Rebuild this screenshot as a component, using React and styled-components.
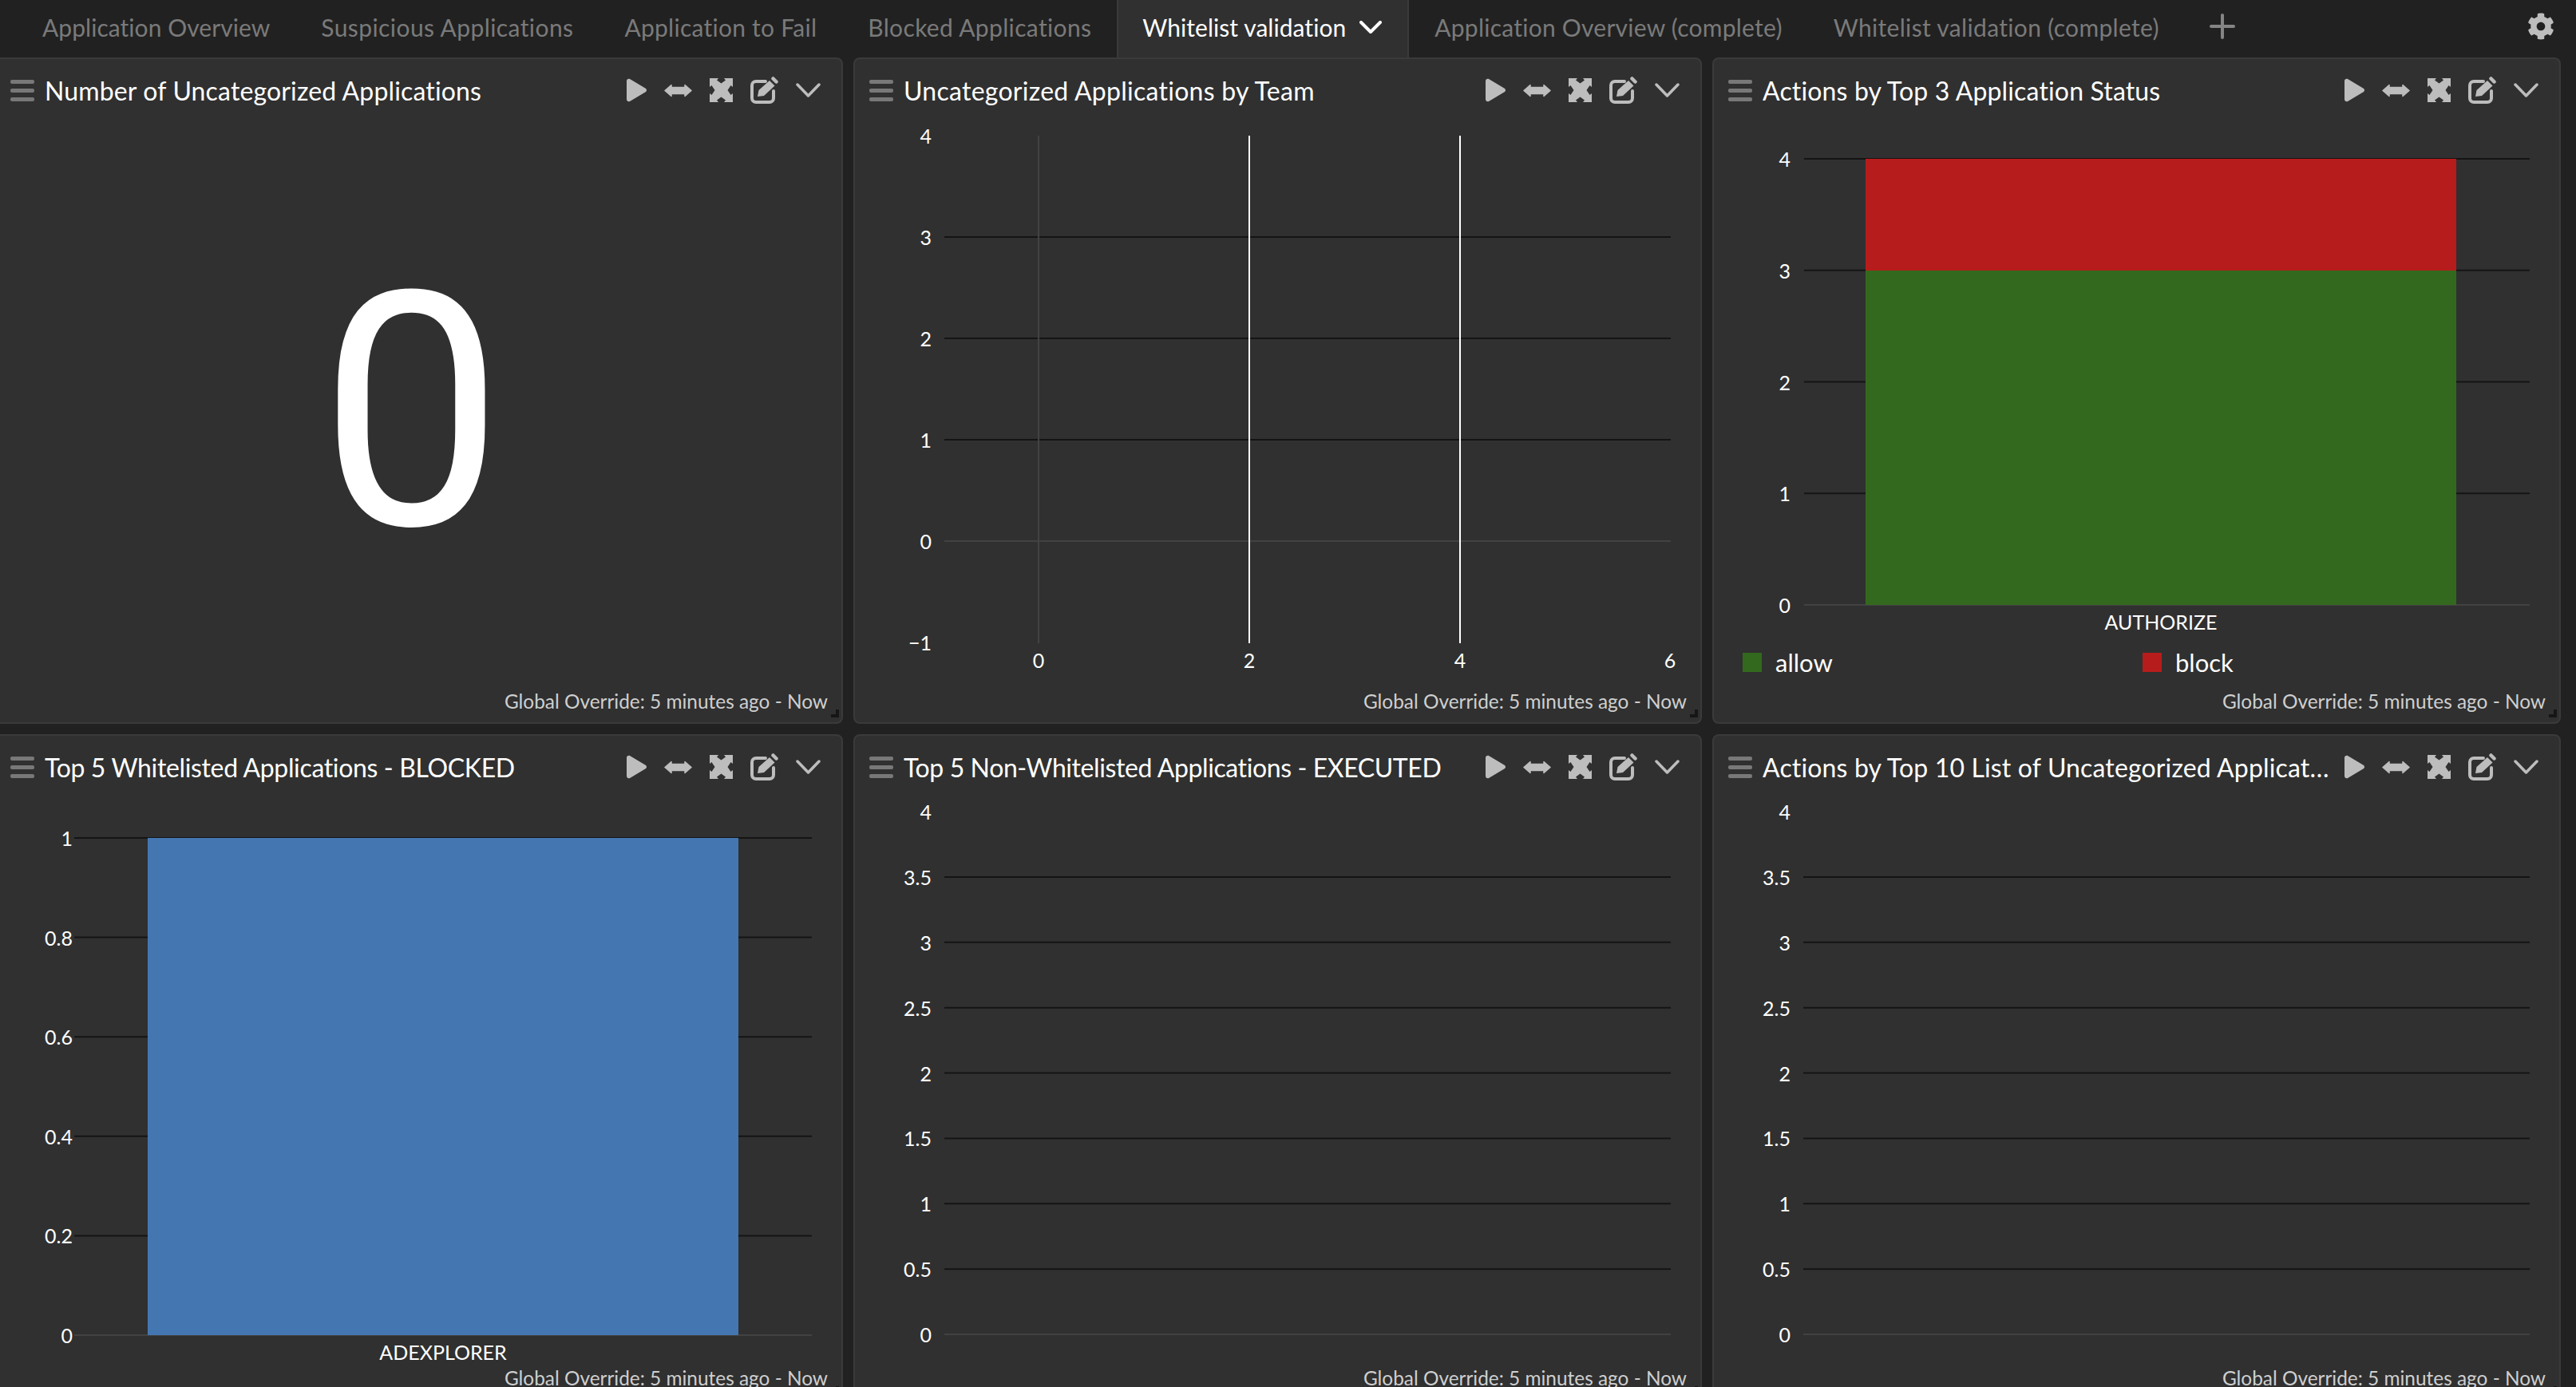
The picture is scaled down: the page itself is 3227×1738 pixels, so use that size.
import * as React from 'react';
import styled, { createGlobalStyle } from 'styled-components';
import { FaPlay, FaCog } from 'react-icons/fa';
import { Plus } from 'lucide-react';

const FONT = '"Lato", "Noto Sans", sans-serif';

const GlobalStyle = createGlobalStyle`
  html, body {
    margin: 0;
    padding: 0;
    background: #212121;
    font-family: ${FONT};
  }
`;

const Page = styled.div`
  width: 3227px;
  height: 1738px;
  overflow: hidden;
  background: #212121;
`;

const TabBar = styled.div`
  height: 72px;
  display: flex;
  align-items: stretch;
  padding-left: 21px;
`;

const Tab = styled.div`
  display: flex;
  align-items: center;
  gap: 17px;
  padding: 0 ${p => (p.$active ? 34 : 32)}px 4px 32px;
  font-size: 30px;
  letter-spacing: ${p => p.$ls}px;
  white-space: nowrap;
  color: ${p => (p.$active ? '#ffffff' : '#7a7a7a')};
  background: ${p => (p.$active ? '#303030' : 'transparent')};
  box-shadow: ${p => (p.$active ? 'inset 2px 0 0 #3a3a3a, inset -2px 0 0 #3a3a3a' : 'none')};
`;

const AddTab = styled.div`
  display: flex;
  align-items: center;
  padding: 0 0 6px 23px;
  color: #858585;
`;

const Settings = styled.div`
  margin-left: auto;
  padding: 0 27px 6px 0;
  display: flex;
  align-items: center;
  color: #bdbdbd;
  svg {
    width: 34px;
    height: 34px;
  }
`;

const Grid = styled.div`
  display: grid;
  grid-template-columns: repeat(3, 1063px);
  grid-auto-rows: 835px;
  gap: 13px;
  margin-left: -7px;
`;

const Panel = styled.section`
  position: relative;
  box-sizing: border-box;
  background: #303030;
  border: 2px solid #3a3a3a;
  border-radius: 8px;
`;

const Header = styled.header`
  box-sizing: border-box;
  height: 81px;
  display: flex;
  align-items: center;
  padding: 0 26px 3px 18px;
`;

const Burger = styled.div`
  flex: none;
  width: 30px;
  margin-right: 13px;
  display: flex;
  flex-direction: column;
  gap: 6px;
  span {
    height: 5px;
    border-radius: 2px;
    background: #787878;
  }
`;

const Title = styled.h2`
  flex: 1;
  min-width: 0;
  margin: 0;
  font-size: 32px;
  letter-spacing: ${p => p.$ls}px;
  font-weight: 400;
  color: #ffffff;
  white-space: nowrap;
  overflow: hidden;
  text-overflow: ellipsis;
`;

const Tools = styled.div`
  flex: none;
  margin-left: 18px;
  display: flex;
  align-items: center;
  gap: 22px;
  color: #bdbdbd;
`;

const Tool = styled.span`
  display: flex;
  align-items: center;
  justify-content: center;
  width: ${p => p.$w}px;
  height: 36px;
  svg {
    display: block;
    width: ${p => p.$w}px;
    height: ${p => p.$h}px;
  }
`;

const Footer = styled.div`
  position: absolute;
  right: 17px;
  bottom: 10px;
  font-size: 24.4px;
  line-height: 32px;
  color: #cfcfcf;
  white-space: nowrap;
`;

const Resize = styled.div`
  position: absolute;
  right: 3px;
  bottom: 6px;
  width: 10px;
  height: 10px;
  border-right: 4px solid #161616;
  border-bottom: 4px solid #161616;
  box-sizing: border-box;
`;

const BigValue = styled.div`
  height: 752px;
  display: flex;
  align-items: center;
  justify-content: center;
  padding: 0 18px 28px 0;
  box-sizing: border-box;
  font-family: "Roboto", sans-serif;
  font-size: 410px;
  line-height: 1;
  font-weight: 400;
  color: #ffffff;
`;

const ChartSvg = styled.svg`
  display: block;
  overflow: visible;
  font-family: ${FONT};
  text {
    fill: #ffffff;
    font-size: 25px;
    dominant-baseline: central;
  }
`;

const Legend = styled.div`
  height: 40px;
  display: grid;
  grid-template-columns: 501px 1fr;
  padding-left: 36px;
`;

const LegendItem = styled.div`
  display: flex;
  align-items: center;
  gap: 17px;
  font-size: 31px;
  color: #ffffff;
`;

const Swatch = styled.i`
  width: 24px;
  height: 24px;
  background: ${p => p.$color};
`;

const Chevron = ({ w, h, color, stroke }) => (
  <svg viewBox={`0 0 ${w} ${h}`} width={w} height={h} fill="none" style={{ display: 'block' }}>
    <polyline
      points={`2,2 ${w / 2},${h - 2} ${w - 2},2`}
      stroke={color}
      strokeWidth={stroke}
      strokeLinecap="round"
      strokeLinejoin="round"
    />
  </svg>
);

const ArrowsIcon = () => (
  <svg viewBox="0 0 35 17" fill="currentColor" stroke="currentColor" strokeWidth="1.5" strokeLinejoin="round">
    <path d="M1 8.5 L9 1.5 V4.5 H26 V1.5 L34 8.5 L26 15.5 V12.5 H9 V15.5 Z" />
  </svg>
);

const ExpandIcon = () => (
  <svg viewBox="0 0 29 30" fill="currentColor">
    <path d="M0 0H11L9 2.5L14.5 6.5L20 2.5L18 0H29V11L26.5 9L22.5 15L26.5 21L29 19V30H18L20 27.5L14.5 23.5L9 27.5L11 30H0V19L2.5 21L6.5 15L2.5 9L0 11Z" />
  </svg>
);

const EditIcon = () => (
  <svg viewBox="0 0 35 34" fill="none">
    <path
      d="M19 6H7a5 5 0 0 0-5 5V27a5 5 0 0 0 5 5H24a5 5 0 0 0 5-5V18"
      stroke="currentColor"
      strokeWidth="4"
      strokeLinecap="round"
    />
    <path d="M9 25L10.5 17L24 5L30.5 11.5L17 24Z" fill="currentColor" />
    <path d="M28.5 2.5L32.5 6.5" stroke="currentColor" strokeWidth="4.5" strokeLinecap="round" />
  </svg>
);

const PanelHeader = ({ title, ls }) => (
  <Header>
    <Burger>
      <span />
      <span />
      <span />
    </Burger>
    <Title $ls={ls}>{title}</Title>
    <Tools>
      <Tool $w={25} $h={30}>
        <FaPlay />
      </Tool>
      <Tool $w={35} $h={17}>
        <ArrowsIcon />
      </Tool>
      <Tool $w={29} $h={30}>
        <ExpandIcon />
      </Tool>
      <Tool $w={35} $h={34}>
        <EditIcon />
      </Tool>
      <Tool $w={31} $h={18}>
        <Chevron w={31} h={18} color="#bdbdbd" stroke={3.5} />
      </Tool>
    </Tools>
  </Header>
);

const Card = ({ title, ls = 0.15, children }) => (
  <Panel>
    <PanelHeader title={title} ls={ls} />
    {children}
    <Footer>Global Override: 5 minutes ago - Now</Footer>
    <Resize />
  </Panel>
);

// y axis of a chart, value -> pixel is linear between the top and zero lines
const yAt = (top, zero, max, v) => zero + ((top - zero) * v) / max;

const Grids = ({ ticks, top, zero, max, x1, x2, labelX, skip = [] }) =>
  ticks.map(t => {
    const y = yAt(top, zero, max, t);
    return (
      <g key={t}>
        {!skip.includes(t) && (
          <line x1={x1} x2={x2} y1={y} y2={y} stroke={t === 0 ? '#424242' : '#141414'} strokeWidth="2" />
        )}
        <text x={labelX} y={y} textAnchor="end">
          {t < 0 ? `\u2212${-t}` : t}
        </text>
      </g>
    );
  });

const TeamChart = () => {
  const xs = [
    [0, 230, '#424242'],
    [2, 494, '#ffffff'],
    [4, 758, '#ffffff'],
    [6, 1021, null]
  ];
  return (
    <ChartSvg width="1059" height="740">
      <Grids ticks={[4, 3, 2, 1, 0, -1]} skip={[4, -1]} top={15} zero={523} max={4} x1={112} x2={1022} labelX={96} />
      {xs.map(([label, x, color]) => (
        <g key={label}>
          {color && <line x1={x} x2={x} y1={15} y2={651} stroke={color} strokeWidth="2" />}
          <text x={x} y={672} textAnchor="middle">
            {label}
          </text>
        </g>
      ))}
    </ChartSvg>
  );
};

const StatusChart = () => (
  <>
    <ChartSvg width="1059" height="655">
      <Grids ticks={[4, 3, 2, 1, 0]} top={44} zero={603} max={4} x1={113} x2={1022} labelX={96} />
      <rect x="190" y="44" width="740" height="140" fill="#b71c1c" />
      <rect x="190" y="184" width="740" height="419" fill="#33691e" />
      <text x="560" y="624" textAnchor="middle">
        AUTHORIZE
      </text>
    </ChartSvg>
    <Legend>
      <LegendItem>
        <Swatch $color="#33691e" />
        allow
      </LegendItem>
      <LegendItem>
        <Swatch $color="#b71c1c" />
        block
      </LegendItem>
    </Legend>
  </>
);

const BlockedChart = () => (
  <ChartSvg width="1059" height="740">
    <Grids ticks={[1, 0.8, 0.6, 0.4, 0.2, 0]} top={47} zero={670} max={1} x1={98} x2={1022} labelX={96} />
    <rect x="190" y="47" width="740" height="623" fill="#4477b2" />
    <text x="560" y="691" textAnchor="middle">
      ADEXPLORER
    </text>
  </ChartSvg>
);

const EmptyChart = () => (
  <ChartSvg width="1059" height="740">
    <Grids
      ticks={[4, 3.5, 3, 2.5, 2, 1.5, 1, 0.5, 0]}
      skip={[4]}
      top={14}
      zero={669}
      max={4}
      x1={112}
      x2={1022}
      labelX={96}
    />
  </ChartSvg>
);

const tabs = [
  { name: 'Application Overview', ls: 0.05 },
  { name: 'Suspicious Applications', ls: 0.42 },
  { name: 'Application to Fail', ls: 0.25 },
  { name: 'Blocked Applications', ls: 0.35 },
  { name: 'Whitelist validation', ls: 0.05, active: true },
  { name: 'Application Overview (complete)', ls: 0.25 },
  { name: 'Whitelist validation (complete)', ls: 0.33 }
];

export default function App() {
  return (
    <Page>
      <GlobalStyle />
      <TabBar>
        {tabs.map(({ name, ls, active }) => (
          <Tab key={name} $active={active} $ls={ls}>
            {name}
            {active && <Chevron w={28} h={16} color="#ffffff" stroke={4} />}
          </Tab>
        ))}
        <AddTab>
          <Plus size={48} strokeWidth={2} />
        </AddTab>
        <Settings>
          <FaCog />
        </Settings>
      </TabBar>
      <Grid>
        <Card title="Number of Uncategorized Applications">
          <BigValue>0</BigValue>
        </Card>
        <Card title="Uncategorized Applications by Team" ls={0.27}>
          <TeamChart />
        </Card>
        <Card title="Actions by Top 3 Application Status">
          <StatusChart />
        </Card>
        <Card title="Top 5 Whitelisted Applications - BLOCKED" ls={-0.35}>
          <BlockedChart />
        </Card>
        <Card title="Top 5 Non-Whitelisted Applications - EXECUTED" ls={-0.4}>
          <EmptyChart />
        </Card>
        <Card title="Actions by Top 10 List of Uncategorized Applications">
          <EmptyChart />
        </Card>
      </Grid>
    </Page>
  );
}
